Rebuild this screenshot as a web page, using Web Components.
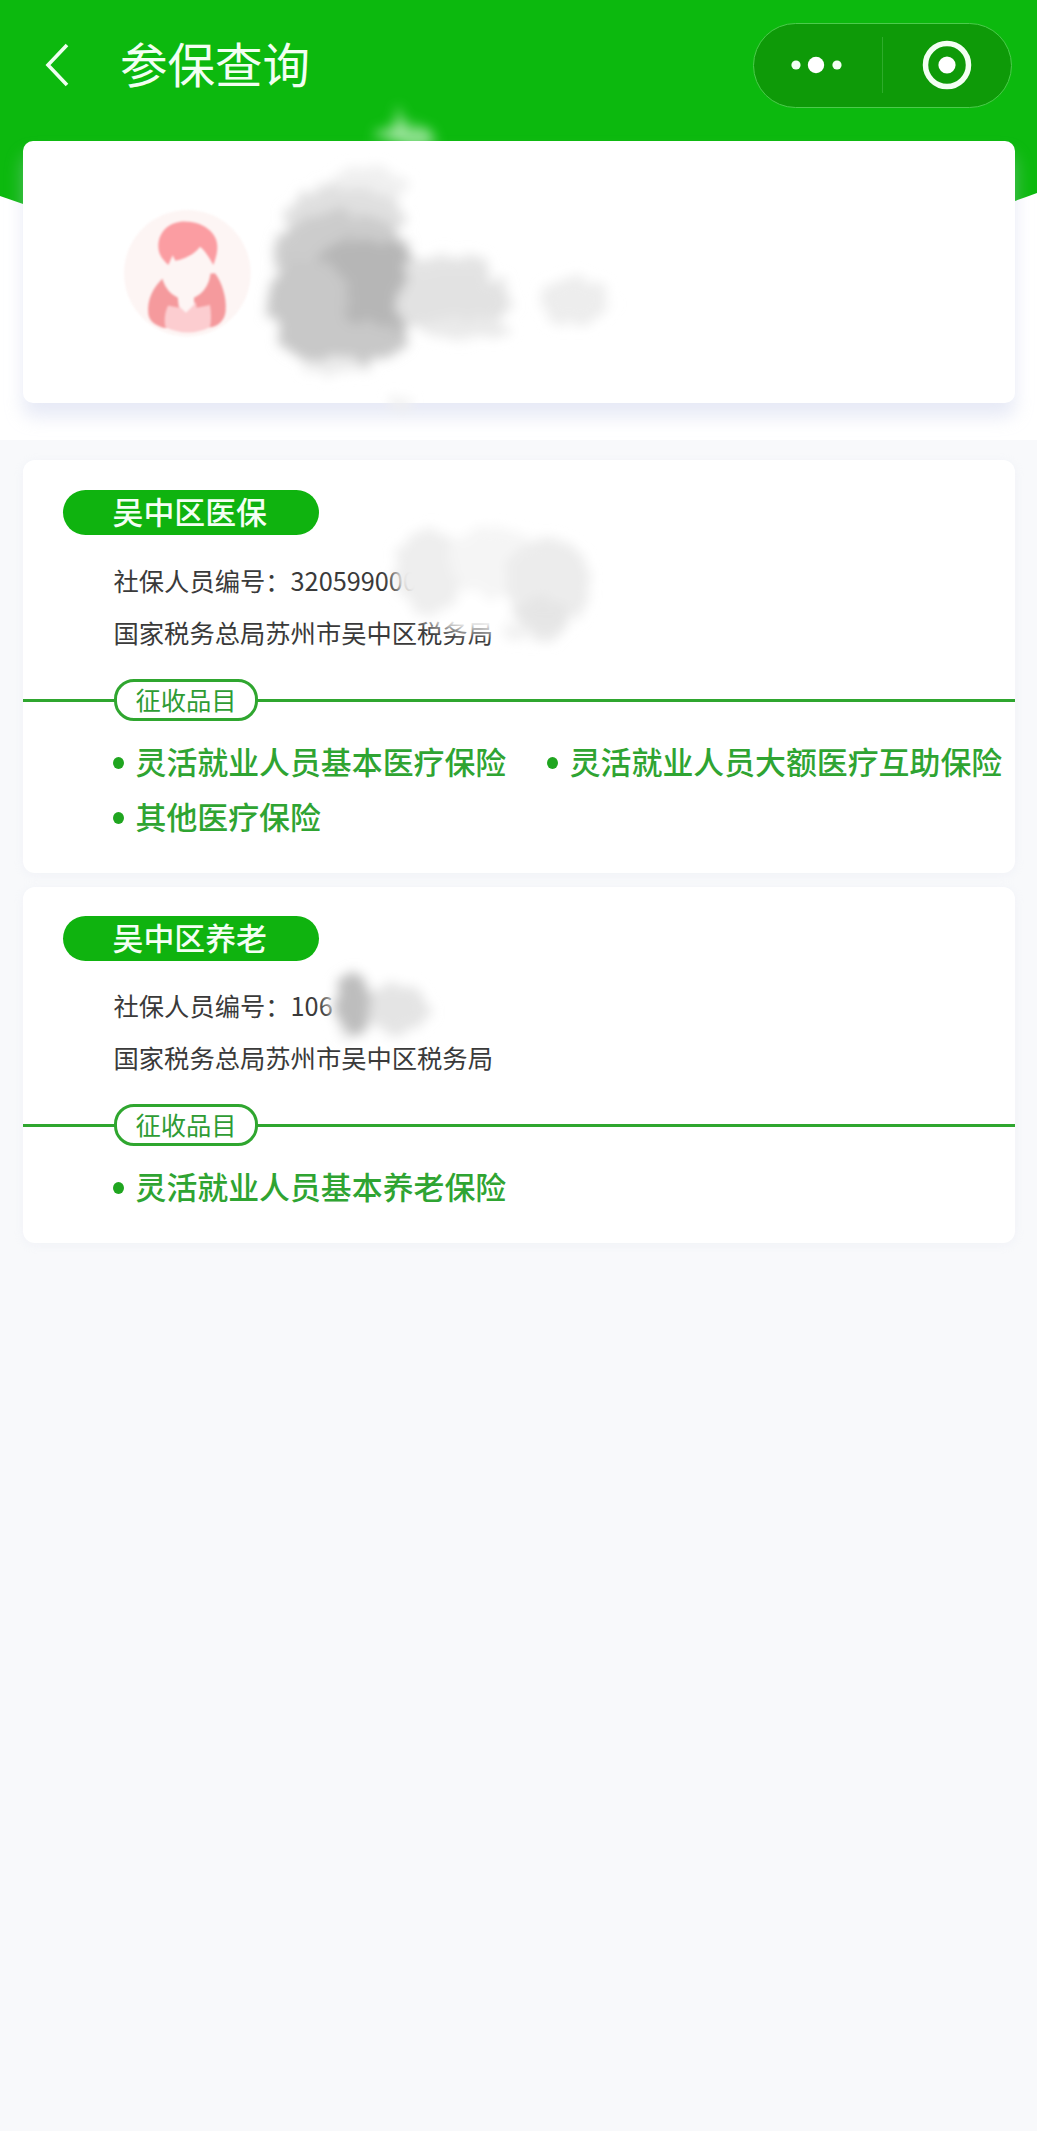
<!DOCTYPE html>
<html lang="zh-CN">
<head>
<meta charset="utf-8">
<title>参保查询</title>
<style>
  html, body { margin: 0; padding: 0; background: #f8f9fb; }
  body { font-family: "Noto Sans CJK SC", "Noto Sans", sans-serif; }
</style>
</head>
<body>
<top-banner>
  <nav-bar title="参保查询"></nav-bar>
  <ink-smudge blobs="398,124,6,18,#8fe08f,.75;405,136,30,10,#a5e8a5,.85"></ink-smudge>
  <profile-card>
    <ink-smudge blobs="342,46,40,20,#f0f0f0,1;320,76,60,30,#e0e0e0,1;318,112,68,40,#cccccc,1;340,150,62,52,#b6b6b6,1;285,160,40,42,#c8c8c8,1;318,200,64,22,#c8c8c8,1;315,226,34,8,#ececec,1;425,128,44,14,#e4e4e4,1;430,160,58,32,#e2e2e2,1;440,188,46,10,#eaeaea,1;552,160,34,24,#ededed,1;378,264,14,5,#f0f0f0,1"></ink-smudge>
  </profile-card>
</top-banner>
<card-list>
  <tax-card name="吴中区医保" code="320599000" office="国家税务总局苏州市吴中区税务局" items="灵活就业人员基本医疗保险|灵活就业人员大额医疗互助保险|其他医疗保险">
    <ink-smudge blobs="450,118,74,54,#ffffff,1;405,112,34,42,#ececec,.9;470,102,44,36,#f4f4f4,.9;525,122,44,44,#ebebeb,.95;520,158,26,20,#e4e4e4,.85;495,172,14,10,#eeeeee,.8"></ink-smudge>
  </tax-card>
  <tax-card class="second" name="吴中区养老" code="106" office="国家税务总局苏州市吴中区税务局" items="灵活就业人员基本养老保险">
    <ink-smudge blobs="352,118,48,34,#ffffff,1;330,118,18,32,#bdbdbd,1;374,122,30,26,#e4e4e4,1"></ink-smudge>
  </tax-card>
</card-list>

<script>
class TopBanner extends HTMLElement {
  constructor() {
    super();
    this.attachShadow({ mode: "open" });
    this.shadowRoot.innerHTML = `
      <style>
        :host { display: block; position: relative; background: #fff; padding-bottom: 37px; }
        svg { position: absolute; left: 0; top: 0; width: 100%; height: 300px; }
        .in { position: relative; }
      </style>
      <svg viewBox="0 0 1037 300" aria-hidden="true"><path d="M0 0H1037V193Q518 385 0 196Z" fill="#0cb90e"/></svg>
      <div class="in"><slot></slot></div>`;
  }
}
customElements.define("top-banner", TopBanner);

class NavBar extends HTMLElement {
  constructor() {
    super();
    this.attachShadow({ mode: "open" });
    this.shadowRoot.innerHTML = `
      <style>
        :host { display: block; height: 141px; color: #fff; position: relative; }
        .bar { display: flex; align-items: center; height: 130px; padding: 0 25px 0 45px; }
        .back { width: 24px; height: 44px; flex: none; }
        h1 { margin: 0 0 4px 51px; font-size: 47.5px; line-height: 60px; font-weight: 400; flex: 1; white-space: nowrap; color: #f2fff2; }
        .capsule { width: 259px; height: 85px; box-sizing: border-box; border: 1.5px solid #4ccb4c; border-radius: 43px; background: #0e9a08; display: flex; align-items: center; }
        .capsule svg { display: block; }
        .more { flex: 1; display: flex; justify-content: center; }
        .sep { width: 1px; height: 56px; background: #2eac2b; }
        .ring { width: 128px; display: flex; justify-content: center; }
      </style>
      <div class="bar">
        <svg class="back" viewBox="0 0 24 44"><path d="M22 2 3 22l19 20" fill="none" stroke="#effff0" stroke-width="3.6"/></svg>
        <h1></h1>
        <div class="capsule">
          <div class="more"><svg width="54" height="18" viewBox="0 0 54 18"><circle cx="5" cy="9" r="4.6" fill="#f3fff3"/><circle cx="25" cy="9" r="8.2" fill="#fff"/><circle cx="46" cy="9" r="4.6" fill="#f3fff3"/></svg></div>
          <div class="sep"></div>
          <div class="ring"><svg width="50" height="50" viewBox="0 0 50 50"><circle cx="25" cy="25" r="21.5" fill="none" stroke="#f3fff3" stroke-width="5.5"/><circle cx="25" cy="25" r="8.6" fill="#fff"/></svg></div>
        </div>
      </div>`;
    this.shadowRoot.querySelector("h1").textContent = this.getAttribute("title") || "";
  }
}
customElements.define("nav-bar", NavBar);

class ProfileCard extends HTMLElement {
  constructor() {
    super();
    this.attachShadow({ mode: "open" });
    this.shadowRoot.innerHTML = `
      <style>
        :host { display: block; position: relative; margin: 0 22.5px; height: 262px; box-sizing: border-box; background: #fff; border-radius: 10px; box-shadow: 0 14px 18px rgba(196,202,232,.4); padding: 49px 0 0 77.5px; }
        svg { display: block; width: 180px; height: 170px; overflow: visible; filter: blur(1px); }
      </style>
      <svg viewBox="0 0 540 510" aria-hidden="true">
        <circle cx="262" cy="250" r="190" fill="#fdf5f4"/>
        <path d="M192 262C160 290 140 330 145 372c3 24 25 36 48 42l140-2c26-6 42-24 44-50 3-42-12-86-32-112Z" fill="#f59a9d"/>
        <path d="M205 345c40-12 85-12 125 0 4 24 4 48 0 66-40 22-92 22-134 0-4-22-2-44 9-66Z" fill="#fccdd0"/>
        <path d="M232 300h50v44l-24 24-26-24Z" fill="#fdf5f4"/>
        <path d="M283 312c8 12 26 24 47 33l-40 8ZM232 312c-8 12-16 24-35 33l40 8Z" fill="#f59a9d"/>
        <ellipse cx="258" cy="240" rx="74" ry="88" fill="#fdf5f4"/>
        <path d="M175 170C175 120 215 92 260 95 305 95 352 125 352 170 352 192 346 208 340 225 326 200 312 178 300 170 284 194 246 210 226 212L218 196 205 225C190 210 175 195 175 170Z" fill="#fb9da2"/>
      </svg>
      <slot></slot>`;
  }
}
customElements.define("profile-card", ProfileCard);

class CardList extends HTMLElement {
  constructor() {
    super();
    this.attachShadow({ mode: "open" });
    this.shadowRoot.innerHTML = `
      <style>
        :host { display: flex; flex-direction: column; gap: 14px; padding: 20px 22.5px 0; min-height: 1691px; box-sizing: border-box; background: #f8f9fb; }
      </style>
      <slot></slot>`;
  }
}
customElements.define("card-list", CardList);

class TaxCard extends HTMLElement {
  constructor() {
    super();
    this.attachShadow({ mode: "open" });
    this.shadowRoot.innerHTML = `
      <style>
        :host { display: block; position: relative; background: #fff; border-radius: 12px; padding: 30px 0 29px; box-shadow: 0 2px 10px rgba(226,230,242,.3); }
        :host(.second) { padding-top: 29px; }
        :host(.second) .pill { margin-bottom: -1px; }
        .pill { margin-left: 40px; width: 256px; height: 45px; box-sizing: border-box; padding-left: 50px; border-radius: 23px; background: #0fb30f; color: #f4fff4; font-size: 30.9px; line-height: 41px; font-weight: 500; white-space: nowrap; }
        .info { margin: 19px 0 0 91px; font-size: 25.3px; line-height: 52px; color: #3a3a3a; white-space: nowrap; }
        .rule { margin-top: 20px; height: 44px; display: flex; align-items: center; background: linear-gradient(#2fa62f, #2fa62f) 0 50% / 100% 3px no-repeat; }
        .tag { margin-left: 91.5px; width: 144px; height: 42px; box-sizing: border-box; border: 3px solid #2fa62f; border-radius: 20px; background: #fff; color: #2e9c34; font-size: 25.3px; line-height: 34px; text-align: center; white-space: nowrap; }
        ul { list-style: none; margin: 12px 0 0 90.5px; padding: 0; display: flex; flex-wrap: wrap; column-gap: 41px; row-gap: 0; }
        li { display: flex; align-items: center; gap: 11.5px; height: 55px; box-sizing: border-box; padding-bottom: 3px; font-size: 30.9px; font-weight: 500; color: #2fa432; white-space: nowrap; }
        li::before { content: ""; width: 11px; height: 12px; margin-top: 5px; border-radius: 50%; background: #1fa51f; flex: none; }
      </style>
      <div class="pill"></div>
      <div class="info">
        <div class="code"></div>
        <div class="office"></div>
      </div>
      <div class="rule"><div class="tag">征收品目</div></div>
      <ul></ul>
      <slot></slot>`;
    const $ = s => this.shadowRoot.querySelector(s);
    $(".pill").textContent = this.getAttribute("name");
    $(".code").textContent = "社保人员编号：" + this.getAttribute("code");
    $(".office").textContent = this.getAttribute("office");
    for (const item of this.getAttribute("items").split("|")) {
      const li = document.createElement("li");
      li.textContent = item;
      $("ul").append(li);
    }
  }
}
customElements.define("tax-card", TaxCard);

// 打码痕迹：blobs = "cx,cy,rx,ry,color,opacity;..."，坐标相对父元素
class InkSmudge extends HTMLElement {
  constructor() {
    super();
    this.attachShadow({ mode: "open" });
    const ellipses = (this.getAttribute("blobs") || "").split(";").map(b => {
      const [cx, cy, rx, ry, color, op] = b.split(",");
      return `<ellipse cx="${cx}" cy="${cy}" rx="${rx}" ry="${ry}" fill="${color}" opacity="${op}"/>`;
    }).join("");
    this.shadowRoot.innerHTML = `
      <style>
        :host { position: absolute; left: 0; top: 0; width: 100%; height: 100%; pointer-events: none; }
        svg { position: absolute; left: 0; top: 0; width: 100%; height: 100%; overflow: visible; }
      </style>
      <svg aria-hidden="true">
        <defs>
          <filter id="ink" filterUnits="userSpaceOnUse" x="-50" y="-150" width="1100" height="700">
            <feTurbulence type="fractalNoise" baseFrequency="0.08" numOctaves="4" seed="4"/>
            <feDisplacementMap in="SourceGraphic" scale="20" xChannelSelector="R" yChannelSelector="G"/>
            <feGaussianBlur stdDeviation="6"/>
          </filter>
        </defs>
        <g filter="url(#ink)">${ellipses}</g>
      </svg>`;
  }
}
customElements.define("ink-smudge", InkSmudge);
</script>
</body>
</html>
